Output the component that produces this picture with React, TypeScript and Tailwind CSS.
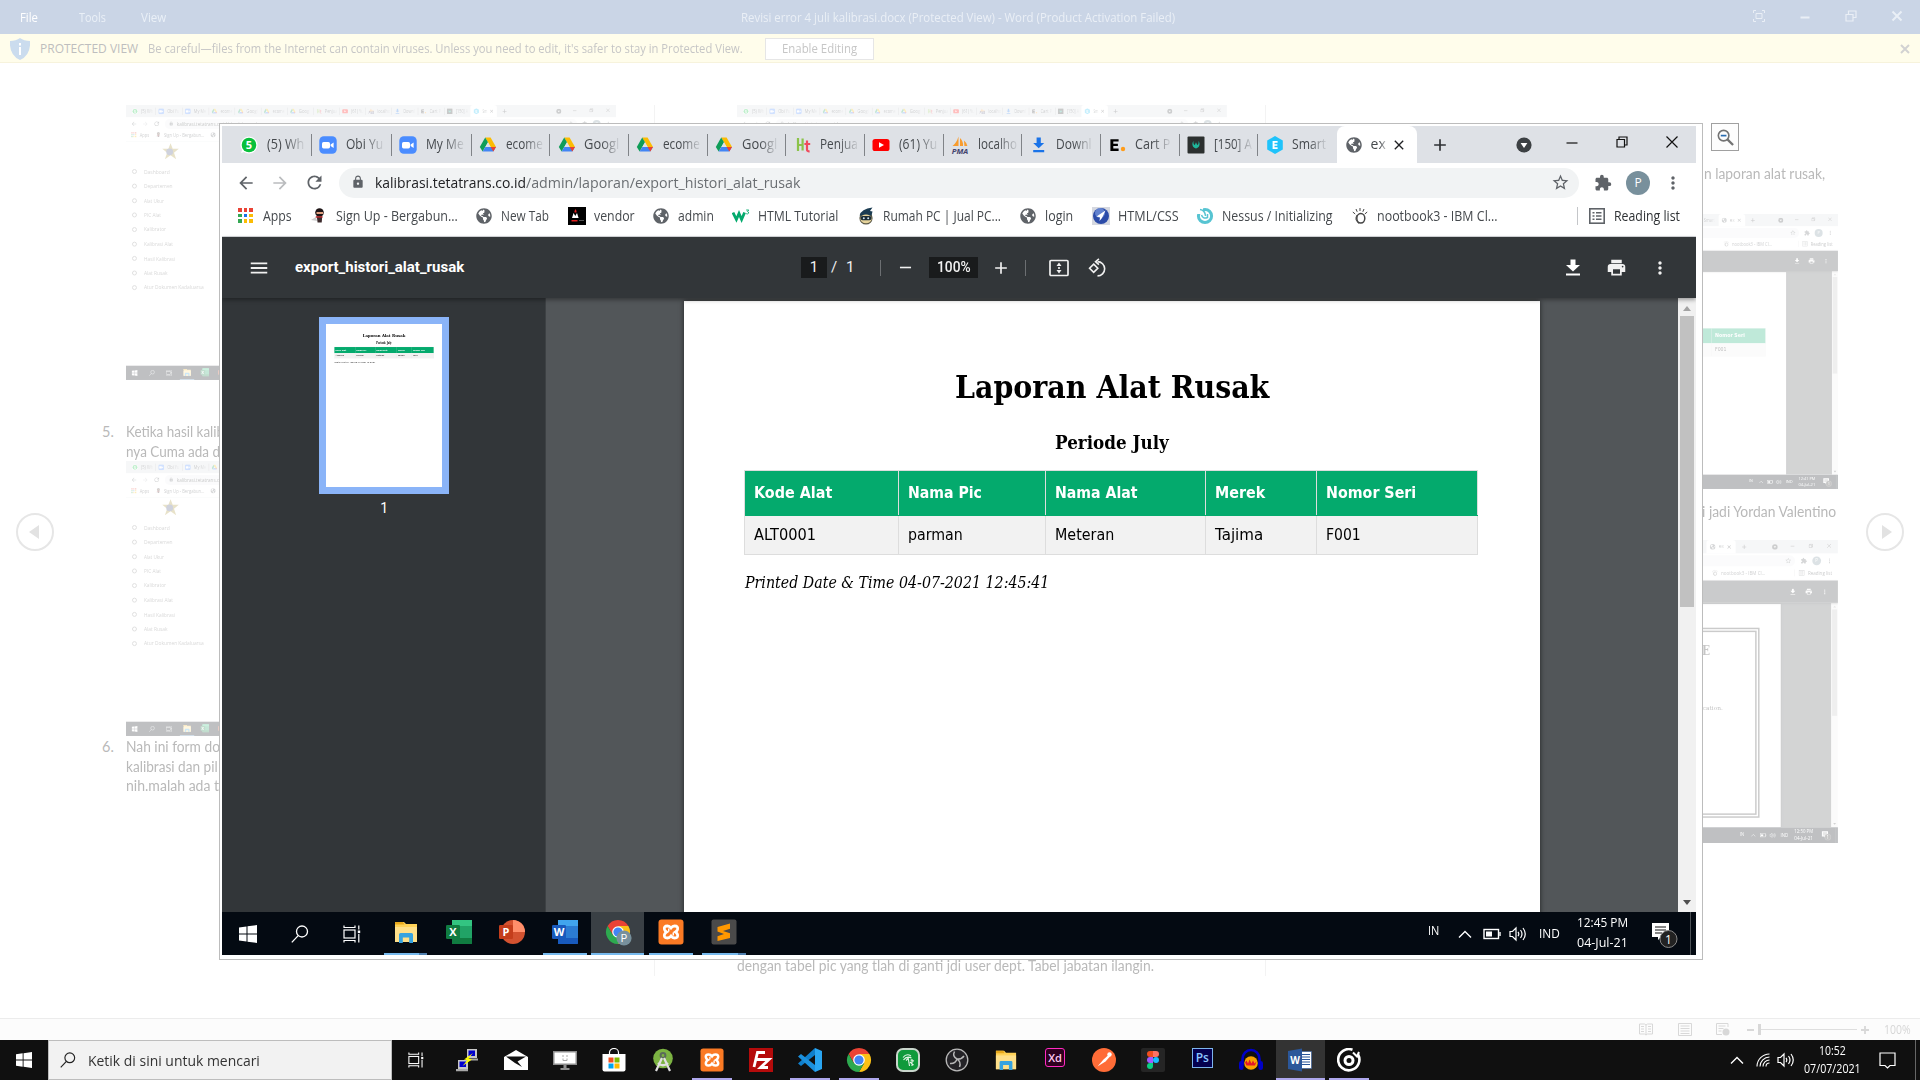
import React, { useLayoutEffect, useRef, useState } from "react";
import {
  MdArrowBack,
  MdArrowForward,
  MdRefresh,
  MdLock,
  MdStarBorder,
  MdExtension,
  MdMoreVert,
  MdMenu,
  MdPrint,
  MdClose,
  MdAdd,
  MdRemove,
} from "react-icons/md";
import { FaGlobeAmericas } from "react-icons/fa";

/* Which part of a browser window can be seen; labels outside it are left blank. */
type View = "full" | "top" | "left" | "right";

/* Text set to an exact width by horizontal scaling. */
function Fit({ w, className = "", show = true, children }: { w: number; className?: string; show?: boolean; children: React.ReactNode }) {
  const ref = useRef<HTMLSpanElement>(null);
  const [sx, setSx] = useState(1);
  useLayoutEffect(() => {
    if (ref.current && ref.current.offsetWidth) setSx(w / ref.current.offsetWidth);
  }, [w]);
  return (
    <span className={"block shrink-0 text-left " + className} style={{ width: w }}>
      <span ref={ref} className="inline-block origin-left whitespace-nowrap" style={{ transform: `scaleX(${sx})` }}>
        {show ? children : "\u00a0"}
      </span>
    </span>
  );
}

/* ---------- small icons ---------- */
const Globe = () => <FaGlobeAmericas className="size-4 text-[#5f6368]" />;

const Drive = () => (
  <svg viewBox="0 0 18 18" className="size-[18px]">
    <path d="M6.2 1.5h5.4l5.4 9.4h-5.4z" fill="#fbbc04" />
    <path d="M6.2 1.5l2.8 4.8-5.4 9.3L.8 10.9z" fill="#0f9d58" />
    <path d="M6.4 10.9H17l-2.7 4.7H3.6z" fill="#4285f4" />
    <path d="M11.6 10.9H17l-2.7 4.7z" fill="#ea4335" />
    <path d="M9 6.3l2.7 4.6H6.4z" fill="#dee1e6" />
  </svg>
);
const Zoom = () => (
  <svg viewBox="0 0 18 18" className="size-[18px]">
    <rect x=".3" y=".3" width="17.4" height="17.4" rx="4.5" fill="#4a8cff" />
    <rect x="3" y="6" width="8" height="6.4" rx="1.6" fill="#fff" />
    <path d="M11.6 8.4l3-2v5.6l-3-2z" fill="#fff" />
  </svg>
);
const WhatsApp = () => (
  <svg viewBox="0 0 18 18" className="size-[18px]">
    <circle cx="9" cy="9" r="8.6" fill="#fff" />
    <path d="M1 17l1.5-4 3 2.6z" fill="#fff" />
    <circle cx="9" cy="9" r="7.3" fill="#09c03b" />
    <text x="9" y="13" textAnchor="middle" fontSize="11" fontWeight="700" fill="#fff" fontFamily="Open Sans, sans-serif">5</text>
  </svg>
);
const Ht = () => (
  <svg viewBox="0 0 18 18" className="size-[18px]" fill="none">
    <path d="M4 2v13M8.600 2.500v12M4 9h5" stroke="#8bc34a" strokeWidth="2.200" />
    <path d="M13 4.500v9q0 2 2.600 1.800M10.400 8h5.800" stroke="#ef4a5c" strokeWidth="2.200" />
  </svg>
);
const YouTube = () => (
  <svg viewBox="0 0 18 18" className="size-[18px]">
    <rect x=".5" y="3" width="17" height="12" rx="2.6" fill="#f00" />
    <path d="M7 6.2l5 2.8-5 2.8z" fill="#fff" />
  </svg>
);
const Pma = () => (
  <svg viewBox="0 0 18 18" className="size-[18px]">
    <path d="M7.500.500v9.500H1.500q4-3 6-9.500zM9 2q3.500 3.500 3 8H9zM13 4.500q3 2.500 3.400 5.500h-3z" fill="#f89c2e" />
    <text x="9" y="17.500" textAnchor="middle" fontSize="7.800" fontWeight="700" fontStyle="italic" fill="#44446e" fontFamily="Open Sans, sans-serif">PMA</text>
  </svg>
);
const Down = () => (
  <svg viewBox="0 0 18 18" className="size-[18px]" fill="#1a73e8">
    <path d="M6.6 1.5h4.2V7h3.4L8.7 12.3 3.2 7h3.4zM3.2 14h11v2.2h-11z" />
  </svg>
);
const ETicket = () => (
  <svg viewBox="0 0 18 18" className="size-[18px]">
    <path d="M1.4 3.2h8.2v2.4H4.3v2.2h4.6v2.3H4.3v2.4h5.3V15H1.4z" fill="#000" />
    <circle cx="14" cy="13" r="2.2" fill="#ff9c1a" />
  </svg>
);
const Rebel = () => (
  <svg viewBox="0 0 18 18" className="size-[18px]">
    <rect x=".5" y=".5" width="17" height="17" rx="1" fill="#2c302f" />
    <path d="M6.600 5C4.400 7.400 5.200 11.800 9 12.400c3.800-.6 4.600-5 2.400-7.400.5 2.200 0 3.500-1.200 3.900L9 6.200 7.800 8.900C6.600 8.500 6.100 7.200 6.600 5z" fill="#1fb59a" />
  </svg>
);
const Hex = () => (
  <svg viewBox="0 0 18 18" className="size-[18px]">
    <path d="M9 0l7.800 4.500v9L9 18l-7.800-4.500v-9z" fill="#1fc3fb" />
    <path d="M6.600 5h5v1.700H8.500v1.500h2.800v1.600H8.500v1.500h3.100V13h-5z" fill="#fff" />
  </svg>
);

const Apps = () => (
  <span className="grid grid-cols-3 gap-[2px]">
    {["bg-[#ea4335]", "bg-[#ea4335]", "bg-[#ea4335]", "bg-[#34a853]", "bg-[#1a73e8]", "bg-[#fbbc04]", "bg-[#34a853]", "bg-[#fbbc04]", "bg-[#fbbc04]"].map((c, i) => (
      <i key={i} className={"size-[3.6px] " + c} />
    ))}
  </span>
);
const Ninja = () => (
  <svg viewBox="0 0 18 18" className="size-[18px]">
    <path d="M1 13l5-3 1 4z" fill="#ccc" />
    <circle cx="9.500" cy="5.500" r="4.300" fill="#1d1416" />
    <path d="M6.500 5h6.600v2H6.500z" fill="#e0a080" />
    <path d="M6.800 9.500h5.400l-.5 6H7.600z" fill="#3b2a2c" />
    <path d="M5.800 9.200h6.700v1.500H5.800z" fill="#b6262a" />
  </svg>
);
const Vendor = () => (
  <svg viewBox="0 0 18 18" className="size-[18px]">
    <path d="M0 0h18v18H0z" fill="#000" />
    <path d="M4 11l1.600-5L7.300 9 9 6l1.600 5z" fill="#fff" />
    <path d="M6.500 4l1-2 1 2v1.500h-2zM3.500 13h6v1.500h-6z" fill="#e02020" />
    <path d="M11 13.500h5" stroke="#666" strokeWidth=".8" />
  </svg>
);
const W3 = () => (
  <svg viewBox="0 0 18 18" className="size-[18px]">
    <path d="M1 5.500l3.400 7 2.600-6 2.600 6 3-7" fill="none" stroke="#04aa6d" strokeWidth="2.800" />
    <path d="M14.200 3h2.600l-1.400 1.500q1.600.2 1.200 1.700-.8 1.100-2.400.5" fill="none" stroke="#04aa6d" strokeWidth=".9" />
  </svg>
);
const Penguin = () => (
  <svg viewBox="0 0 18 18" className="size-[18px]">
    <circle cx="9" cy="11" r="6.600" fill="#5c5a48" />
    <path d="M2.600 8.500Q4 2 15.500.500L13 4l2.500.500-1 4z" fill="#1b3c52" />
    <ellipse cx="9" cy="11.800" rx="5.600" ry="4.400" fill="#e6d39b" />
    <rect x="3.600" y="9" width="10.800" height="4.200" rx="2" fill="#1b2c36" />
    <circle cx="6.800" cy="11.200" r="1" fill="#cfe4ee" />
    <circle cx="11.200" cy="11.200" r="1" fill="#cfe4ee" />
  </svg>
);
const HtmlCss = () => (
  <svg viewBox="0 0 18 18" className="size-[18px]">
    <path d="M0 0h18v18H0z" fill="#d5d8e0" />
    <circle cx="9" cy="9" r="8" fill="#2b4ba8" />
    <circle cx="8" cy="6" r="5" fill="#7a9ae0" opacity=".7" />
    <path d="M13.500 3.500L4.500 9.500l3.500.8L7.500 14l2.500-3z" fill="#fff" />
  </svg>
);
const Nessus = () => (
  <svg viewBox="0 0 18 18" className="size-[18px]" fill="none">
    <circle cx="9" cy="9" r="6.600" stroke="#57c4d2" strokeWidth="3" />
    <path d="M1 1h6v6H1z" fill="#fff" />
    <path d="M4 2.500Q9 3 9.500 9M5.500 8q1.500 4.500 6 2.500V7" stroke="#57c4d2" strokeWidth="1.500" />
  </svg>
);
const Ibm = () => (
  <svg viewBox="0 0 18 18" className="size-[18px]" fill="none" stroke="#444">
    <ellipse cx="9.800" cy="11.300" rx="4" ry="4.800" strokeWidth="1.500" />
    <path d="M6 8q-3 5 2 8.500" strokeWidth=".9" />
    <path d="M9 1v3M5 2l1.200 2.800M13 2l-1.200 2.800M1.800 5l2.400 2M16.200 5l-2.400 2" strokeWidth="1" />
  </svg>
);
const ReadingList = () => (
  <svg viewBox="0 0 16 16" className="size-4" fill="none" stroke="#5f6368">
    <rect x=".8" y=".8" width="14.400" height="14.400" strokeWidth="1.600" />
    <path d="M3.500 4.700h2M7 4.700h5.500M3.500 8h2M7 8h5.500M3.500 11.300h2M7 11.300h5.500" strokeWidth="1.500" />
  </svg>
);

/* ---------- application icons ---------- */
const WinLogo = ({ c = "size-[18px]" }) => (
  <svg viewBox="0 0 18 18" className={c} fill="#fff">
    <path d="M0 2.500L7.500 1.500v7H0zM8.500 1.300L18 0v8.500H8.500zM0 9.500h7.500v7L0 15.500zM8.500 9.500H18V18l-9.500-1.300z" />
  </svg>
);
const Search = ({ c = "size-[18px]", s = "#fff" }) => (
  <svg viewBox="0 0 18 18" className={c} fill="none" stroke={s} strokeWidth="1.300">
    <circle cx="11" cy="6.500" r="5.500" />
    <path d="M7.200 10.600L.8 17.400" />
  </svg>
);
const TaskView = ({ c = "size-[18px]" }) => (
  <svg viewBox="0 0 18 18" className={c} fill="none" stroke="#fff" strokeWidth="1.200">
    <rect x="1" y="5" width="11" height="8" />
    <path d="M1 .5v2h11v-2M1 17.500v-2h11v2M15.800.5v4M15.800 9v8.500" />
    <rect x="14.800" y="5.500" width="2.400" height="2.600" fill="#fff" stroke="none" />
  </svg>
);
const Explorer = ({ c = "size-6" }) => (
  <svg viewBox="0 0 24 24" className={c}>
    <path d="M1 2h9l2 2h11v18H1z" fill="#ffd257" />
    <path d="M1 2h8l1.500 2.600H1z" fill="#e8a91c" />
    <path d="M1 7h22v15H1z" fill="#ffe08a" />
    <path d="M5 23v-8.500q0-1.500 1.500-1.500h11q1.500 0 1.500 1.500V23h-3.800v-5.500H8.800V23z" fill="#37a3e0" />
  </svg>
);
function Office({ letter, tint, dark, light, round = false }: { letter: string; tint: string; dark: string; light: string; round?: boolean }) {
  return (
    <svg viewBox="0 0 26 26" className="size-[26px]">
      {round ? (
        <>
          <circle cx="14" cy="13" r="12" fill={tint} />
          <path d="M14 1a12 12 0 0 1 12 12H14z" fill={light} />
        </>
      ) : (
        <>
          <rect x="6" y="1" width="20" height="24" rx="1.500" fill={tint} />
          <path d="M6 1h20v6H6z" fill={light} />
          <path d="M6 19h20v5q0 1-1 1H6z" fill={dark} />
        </>
      )}
      <rect x="0" y="6" width="14" height="14" rx="1.200" fill={dark} />
      <text x="7" y="17" textAnchor="middle" fontSize="11" fontWeight="700" fill="#fff" fontFamily="Open Sans, sans-serif">{letter}</text>
    </svg>
  );
}
const Chrome = ({ badge = false }) => (
  <svg viewBox="0 0 28 28" className="size-[28px]">
    <path d="M14 8h10.400a12 12 0 0 0-20.800 0L8.800 17z" fill="#ea4335" />
    <path d="M19.200 17L14 26a12 12 0 0 0 10.400-18H14z" fill="#fbc116" />
    <path d="M8.800 17L3.600 8A12 12 0 0 0 14 26l5.200-9z" fill="#2da94f" />
    <circle cx="14" cy="14" r="5.800" fill="#fff" />
    <circle cx="14" cy="14" r="4.600" fill="#4285f4" />
    {badge && (
      <>
        <circle cx="20" cy="20" r="7.600" fill="#78909c" />
        <text x="20" y="23.500" textAnchor="middle" fontSize="10" fill="#fff" fontFamily="Roboto, sans-serif">P</text>
      </>
    )}
  </svg>
);
const Xampp = ({ c = "size-[26px]" }) => (
  <svg viewBox="0 0 26 26" className={c}>
    <rect x=".5" y=".5" width="25" height="25" rx="3" fill="#fb7a24" />
    <path d="M9.500 7q-4 0-3 3.500 .5 1.500 2 2.500-1.500 1-2 2.500-1 3.500 3 3.500 2 0 3.500-2 1.500 2 3.500 2 4 0 3-3.500-.5-1.500-2-2.500 1.500-1 2-2.500 1-3.500-3-3.500-2 0-3.500 2-1.500-2-3.500-2zM10 11l1.500 0M14.500 15h1.500" fill="none" stroke="#fff" strokeWidth="2.800" />
  </svg>
);
const Sublime = () => (
  <svg viewBox="0 0 26 26" className="size-[26px]">
    <rect x=".5" y=".5" width="25" height="25" rx="2" fill="#4a4a4a" />
    <path d="M19 4.500v5.200l-7 2.200 7 2.300v4.800L6.500 22v-4.800l6.500-2.200-6.500-2.400V8z" fill="#ff9800" />
  </svg>
);
const Battery = () => (
  <svg viewBox="0 0 18 12" className="h-3 w-[18px]" fill="none" stroke="#fff" strokeWidth="1.400">
    <rect x="1" y="1.500" width="14.500" height="9" />
    <path d="M17 4v4" />
    <rect x="3" y="3.500" width="6" height="5" fill="#fff" stroke="none" />
  </svg>
);
const Speaker = () => (
  <svg viewBox="0 0 18 16" className="h-4 w-[18px]" fill="none" stroke="#fff" strokeWidth="1.200">
    <path d="M1 5.500h2.500L7 2v12L3.500 10.500H1z" />
    <path d="M9 5.800q1.600 2.200 0 4.400M11.500 4q3 4 0 8M14 2q4.500 6 0 12" />
  </svg>
);
const Chevron = () => (
  <svg viewBox="0 0 14 8" className="h-2 w-[14px]" fill="none" stroke="#fff" strokeWidth="1.400">
    <path d="M1 7.500l6-6 6 6" />
  </svg>
);
const Download = () => (
  <svg viewBox="0 0 14 17" className="h-[17px] w-[14px]" fill="#fff">
    <path d="M4.500.5h5v5.500H14l-7 6.500L0 6h4.500zM0 14.500h14v2H0z" />
  </svg>
);

/* ---------- browser window ---------- */
type TabInfo = { icon: React.ReactNode; text: string; tw: number; w: string };
const TABS: TabInfo[] = [
  { icon: <WhatsApp />, text: "(5) Wh", tw: 37, w: "w-[79px]" },
  { icon: <Zoom />, text: "Obi Yu", tw: 37, w: "w-[80px]" },
  { icon: <Zoom />, text: "My Me", tw: 38, w: "w-[80px]" },
  { icon: <Drive />, text: "ecome", tw: 37, w: "w-[78.700px]" },
  { icon: <Drive />, text: "Googl", tw: 35, w: "w-[78.700px]" },
  { icon: <Drive />, text: "ecome", tw: 37, w: "w-[78.700px]" },
  { icon: <Drive />, text: "Googl", tw: 35, w: "w-[78.700px]" },
  { icon: <Ht />, text: "Penjua", tw: 38, w: "w-[78.700px]" },
  { icon: <YouTube />, text: "(61) Yu", tw: 38, w: "w-[78.700px]" },
  { icon: <Pma />, text: "localho", tw: 39, w: "w-[78.700px]" },
  { icon: <Down />, text: "Downl", tw: 36, w: "w-[78.700px]" },
  { icon: <ETicket />, text: "Cart P", tw: 35, w: "w-[78.700px]" },
  { icon: <Rebel />, text: "[150] A", tw: 38, w: "w-[78.700px]" },
  { icon: <Hex />, text: "Smart", tw: 34, w: "w-[78.200px]" },
];

function TabStrip({ app, view }: { app: boolean; view: View }) {
  const tabs = app ? TABS.slice(0, 13) : TABS;
  const shown = (i: number) => (view === "left" ? i < 3 : view === "right" ? i === 13 : true);
  return (
    <div className="flex h-[37px] shrink-0 items-center bg-[#dee1e6] pl-[10.500px]">
      {tabs.map((t, i) => (
        <div key={i} className={"flex h-[22px] shrink-0 items-center overflow-hidden pl-[7.500px] " + t.w + (i < tabs.length - 1 ? " border-r border-[#808388]" : "")}>
          <span className="mr-[8.500px] flex size-[18px] shrink-0 items-center justify-center">{t.icon}</span>
          <Fit w={t.tw} show={shown(i)} className="mb-[2px] text-[14px] leading-[20px] text-[#45494d] [mask-image:linear-gradient(to_right,#000_50%,rgba(0,0,0,0.1))]">{t.text}</Fit>
        </div>
      ))}
      <div className="flex h-full w-[80px] shrink-0 items-center rounded-t-lg bg-white pl-[9px]">
        {app ? <Hex /> : <Globe />}
        <Fit w={15} show={view !== "left"} className="mb-[2px] ml-[9px] text-[14px] leading-[20px] text-[#45494d] [mask-image:linear-gradient(to_right,#000_55%,rgba(0,0,0,0.3))]">{app ? "Sm" : "ex"}</Fit>
        <MdClose className="ml-[5px] size-4 text-[#202124]" />
      </div>
      <MdAdd className="ml-[13px] size-[20px] text-[#2e3134]" />
      <div className="ml-auto flex items-center pr-[18px]">
        <svg viewBox="0 0 16 16" className="size-4">
          <circle cx="8" cy="8" r="7.600" fill="#3c4043" />
          <path d="M4.600 6h6.800L8 11z" fill="#fff" />
        </svg>
        <svg viewBox="0 0 12 12" className="mb-[6px] ml-[34px] size-3" stroke="#111" strokeWidth="1.200">
          <path d="M.5 7h11" />
        </svg>
        <svg viewBox="0 0 12 12" className="mb-[6px] ml-[38px] size-3" fill="none" stroke="#111" strokeWidth="1.200">
          <path d="M1 3.500h7.500V11H1zM3 3V1h8v8H9" />
        </svg>
        <svg viewBox="0 0 12 12" className="mb-[6px] ml-[38px] size-3" stroke="#111" strokeWidth="1.200">
          <path d="M.5.5l11 11M11.500.5l-11 11" />
        </svg>
      </div>
    </div>
  );
}

function AddressBar({ app, view }: { app: boolean; view: View }) {
  return (
    <div className="flex h-[39px] shrink-0 items-center bg-white pl-[14px] text-[#5f6368]">
      <MdArrowBack className="size-[20px]" />
      <MdArrowForward className="ml-[14px] size-[20px] text-[#babcbe]" />
      <MdRefresh className="ml-[14px] size-[21px]" />
      <div className="ml-[14px] flex h-[30px] w-[1240px] items-center rounded-full bg-[#f1f3f4] pb-px pl-[12px]">
        <MdLock className="size-[14px]" />
        <Fit w={151} show={view !== "right"} className="ml-[10px] text-[15px] text-[#202124]">kalibrasi.tetatrans.co.id</Fit>
        <Fit w={app ? 90 : 274} show={view === "full" || view === "top"} className="text-[15px] text-[#6a6e72]">{app ? "/dashboard" : "/admin/laporan/export_histori_alat_rusak"}</Fit>
        <MdStarBorder className="mr-[9px] ml-auto size-[19px]" />
      </div>
      <MdExtension className="ml-[15px] size-[18px]" />
      <span className="ml-[14px] flex size-6 items-center justify-center rounded-full bg-[#78909c] text-[12px] text-white">P</span>
      <MdMoreVert className="ml-[13px] size-[20px]" />
    </div>
  );
}

const BOOKMARKS: [React.ReactNode, string, number][] = [
  [<Apps />, "Apps", 29],
  [<Ninja />, "Sign Up - Bergabun...", 121.5],
  [<Globe />, "New Tab", 48],
  [<Vendor />, "vendor", 40.5],
  [<Globe />, "admin", 35.5],
  [<W3 />, "HTML Tutorial", 80.5],
  [<Penguin />, "Rumah PC | Jual PC...", 118],
  [<Globe />, "login", 28.5],
  [<HtmlCss />, "HTML/CSS", 60.5],
  [<Nessus />, "Nessus / Initializing", 110.5],
  [<Ibm />, "nootbook3 - IBM Cl...", 121],
];

function Bookmarks({ view }: { view: View }) {
  const shown = (i: number) => view === "full" || (view === "right" ? i === 10 : i < 2);
  return (
    <div className="flex h-[35px] shrink-0 items-center gap-[18.200px] border-b border-[#d5d7da] bg-white pb-[7px] pl-[14.500px] text-[14px] text-[#45494d]">
      {BOOKMARKS.map(([icon, text, w], i) => (
        <div key={i} className="flex shrink-0 items-center gap-2">
          <span className="flex size-[18px] items-center justify-center">{icon}</span>
          <Fit w={w} show={shown(i)}>{text}</Fit>
        </div>
      ))}
      <div className="mr-4 ml-auto flex items-center">
        <i className="mr-[11px] h-[18px] w-px bg-[#c4c6c9]" />
        <ReadingList />
        <Fit w={66} show={view === "full" || view === "right"} className="ml-[9px] text-[#2e3134]">Reading list</Fit>
      </div>
    </div>
  );
}

function PdfToolbar({ full }: { full: boolean }) {
  return (
    <div className="z-10 flex h-[61px] shrink-0 items-center bg-[#323639] pl-[26px] font-['Roboto',sans-serif] text-[15px] text-[#f1f1f1] shadow-[0_2px_4px_rgba(0,0,0,0.35)]">
      <MdMenu className="size-[22px]" />
      <Fit w={169} show={full} className="ml-[25px] font-bold text-white">export_histori_alat_rusak</Fit>
      <span className="ml-[337px] flex h-[21px] w-[26px] items-center justify-center bg-[#191b1c]">{full && "1"}</span>
      <span className="ml-[4px] w-[9px]">{full && "/"}</span>
      <span className="ml-[6px] w-[9px]">{full && "1"}</span>
      <i className="ml-[25px] h-4 w-px bg-[#6c6f72]" />
      <MdRemove className="ml-[15px] size-[19px]" />
      <span className="ml-[14px] flex h-[21px] w-[49px] items-center justify-center bg-[#191b1c]"><Fit w={34} show={full} className="font-medium">100%</Fit></span>
      <MdAdd className="ml-[13px] size-[20px]" />
      <i className="ml-[14px] h-4 w-px bg-[#6c6f72]" />
      <svg viewBox="0 0 20 18" className="ml-[23px] h-[18px] w-[20px]" fill="none" stroke="#f1f1f1" strokeWidth="1.700">
        <rect x="1" y="1.500" width="18" height="15" rx="1" />
        <path d="M10 3.500L12.500 7h-5zM10 14.500l2.500-3.500h-5z" fill="#f1f1f1" stroke="none" />
        <path d="M10 8v2" />
      </svg>
      <svg viewBox="0 0 22 20" className="ml-[18px] h-[20px] w-[21px]" fill="none" stroke="#f1f1f1" strokeWidth="1.700">
        <path d="M7 6l4.300 4.300L7 14.600l-4.300-4.300z" />
        <path d="M11 3.300a7.500 7.500 0 1 1 0 15" />
        <path d="M12.500.5L9 3.400l3.500 3" />
      </svg>
      <div className="ml-auto flex items-center pr-[26px]">
        <Download />
        <MdPrint className="ml-[26px] size-[21px]" />
        <MdMoreVert className="ml-[23px] size-[20px]" />
      </div>
    </div>
  );
}

const COLUMNS: { head: string; hw: number; cell: string; cw: number; w: string }[] = [
  { head: "Kode Alat", hw: 78, cell: "ALT0001", cw: 62, w: "w-[154px]" },
  { head: "Nama Pic", hw: 74, cell: "parman", cw: 55, w: "w-[147px]" },
  { head: "Nama Alat", hw: 83, cell: "Meteran", cw: 59, w: "w-[160px]" },
  { head: "Merek", hw: 50, cell: "Tajima", cw: 48, w: "w-[111px]" },
  { head: "Nomor Seri", hw: 90, cell: "F001", cw: 35, w: "w-[161px]" },
];

function ReportPage({ full }: { full: boolean }) {
  return (
    <div className="flex flex-col items-center text-black">
      <Fit w={314} show={full} className="mt-[64px] font-['DejaVu_Serif',serif] text-[32px] leading-[44px] font-bold">Laporan Alat Rusak</Fit>
      <Fit w={114} show={full} className="mt-[19px] font-['DejaVu_Serif',serif] text-[19px] leading-[28px] font-bold">Periode July</Fit>
      <div className="mt-[14px] mr-px border border-r-0 border-[#ddd] font-['DejaVu_Sans',sans-serif] text-[16px]">
        <div className="flex h-[45px] bg-[#04aa6d] pb-px font-bold text-white">
          {COLUMNS.map((c, i) => (
            <div key={c.head} className={"flex items-center border-r border-[#ddd] pl-[8.500px] " + c.w}><Fit w={c.hw} show={full || i === 4}>{c.head}</Fit></div>
          ))}
        </div>
        <div className="flex h-[38px] bg-[#f2f2f2]">
          {COLUMNS.map((c, i) => (
            <div key={c.cell} className={"flex items-center border-r border-[#ddd] pl-[8.500px] " + c.w}><Fit w={c.cw} show={full || i === 4}>{c.cell}</Fit></div>
          ))}
        </div>
      </div>
      <Fit w={304} show={full} className="mt-[17px] mr-[430px] font-['DejaVu_Serif',serif] text-[16px] leading-[22px] italic">Printed Date &amp; Time 04-07-2021 12:45:41</Fit>
    </div>
  );
}

function CertificatePage() {
  return (
    <div className="mx-[58px] mt-[65px] flex h-[520px] flex-col items-end border-[12px] border-double border-[#333] font-['DejaVu_Serif',serif]">
      <Fit w={22} className="mt-[26px] mr-[123px] text-[34px] font-bold text-[#222]">E</Fit>
      <Fit w={60} className="mt-[118px] mr-[88px] text-[16px]">ication.</Fit>
    </div>
  );
}

function Thumbnail({ full }: { full: boolean }) {
  return (
    <div className="flex w-[323.500px] shrink-0 flex-col items-center border-r border-[#3d4144] bg-[#323639]">
      <div className="mt-[19px] mr-[-1px] h-[177px] w-[130px] shrink-0 border-[7px] border-[#8ab4f8] bg-white">
        <div className="h-0 w-0 origin-top-left [transform:scale(0.1355)]">
          <div className="w-[856px]"><ReportPage full={full} /></div>
        </div>
      </div>
      <span className="mt-[4px] ml-[2px] font-['Roboto',sans-serif] text-[14px] text-white">{full && "1"}</span>
    </div>
  );
}

function PdfViewer({ certificate, full }: { certificate: boolean; full: boolean }) {
  return (
    <>
      <PdfToolbar full={full} />
      <div className="flex min-h-0 flex-1 overflow-hidden">
        <Thumbnail full={full} />
        <div className="flex-1 bg-[#525659] pt-[3px] pl-[138px]">
          <div className="h-[1200px] w-[856px] overflow-hidden bg-white shadow-[0_0_5px_rgba(0,0,0,0.6)]">
            {certificate ? <CertificatePage /> : <ReportPage full={full} />}
          </div>
        </div>
        <div className="flex w-[18px] flex-col items-center bg-[#f1f1f1]">
          <i className="mt-[8px] size-0 border-x-4 border-b-[5px] border-x-transparent border-b-[#a3a3a3]" />
          <i className="mt-[5px] h-[291px] w-[14px] bg-[#c1c1c1]" />
          <i className="mt-auto mb-[7px] size-0 border-x-4 border-t-[5px] border-x-transparent border-t-[#505050]" />
        </div>
      </div>
    </>
  );
}

const MENU: [string, number][] = [
  ["Dashboard", 77],
  ["Departemen", 86],
  ["Alat Ukur", 60],
  ["PIC Alat", 52],
  ["Kalibrator", 66],
  ["Kalibrasi Alat", 88],
  ["Hasil Kalibrasi", 94],
  ["Alat Rusak", 71],
  ["Atur Dokumen Kadaluarsa", 179],
];

function AppBody() {
  return (
    <div className="flex min-h-0 flex-1 flex-col bg-white">
      <svg viewBox="0 0 40 40" className="mt-[3px] ml-[108px] size-[52px]">
        <path d="M20 1l5 13h14L28 23l5 15-13-9-13 9 5-15L1 14h14z" fill="#a8902c" />
        <circle cx="18" cy="21" r="8" fill="#2a3f8f" opacity=".8" />
      </svg>
      <div className="mt-[13px] flex flex-col">
        {MENU.map(([m, w]) => (
          <div key={m} className="flex h-[43.700px] items-center text-[15px] text-[#666]">
            <i className="mr-[21px] ml-[18px] size-[15px] rounded-full border-3 border-[#888]" />
            <Fit w={w}>{m}</Fit>
          </div>
        ))}
      </div>
    </div>
  );
}

function Slot({ children, bar = "", active = false, extra = false }: { children: React.ReactNode; bar?: string; active?: boolean; extra?: boolean }) {
  return (
    <div className={"flex h-full w-[53px] shrink-0 flex-col items-center " + (active ? "bg-[#3a4045]" : "")}>
      <div className="flex flex-1 items-center justify-center">{children}</div>
      <div className={"flex h-[2.500px] justify-end bg-[#76b9ed] " + (bar || "invisible w-0")}>
        {extra && <i className="w-2 bg-[#4f7fae]" />}
      </div>
    </div>
  );
}

function InnerTaskbar({ time, view }: { time: string; view: View }) {
  const tray = view === "full" || view === "right";
  return (
    <div className="flex h-[43px] shrink-0 items-center bg-[#040a12] text-white">
      <div className="flex w-[52px] justify-center"><WinLogo /></div>
      <div className="flex w-[52px] justify-center"><Search /></div>
      <div className="mr-[2px] flex w-[51px] justify-center"><TaskView /></div>
      <Slot bar="w-[43px]" extra><Explorer /></Slot>
      <Slot><Office letter="X" tint="#21a366" light="#33c481" dark="#107c41" /></Slot>
      <Slot><Office letter="P" tint="#d35230" light="#ff8f6b" dark="#c43e1c" round /></Slot>
      <Slot bar="w-[44px]"><Office letter="W" tint="#2b7cd3" light="#41a5ee" dark="#185abd" /></Slot>
      <Slot bar="w-full" active><Chrome badge /></Slot>
      <Slot bar="w-[44px]"><Xampp /></Slot>
      <Slot bar="w-[44px]" extra><Sublime /></Slot>
      <div className="ml-auto flex h-full items-center text-[13px]">
        <Fit w={11} show={tray} className="mr-[19px] mb-[5px] text-[12px]">IN</Fit>
        <Chevron />
        <span className="ml-[11px]"><Battery /></span>
        <span className="ml-[8px]"><Speaker /></span>
        <Fit w={21} show={tray} className="ml-[12px]">IND</Fit>
        <div className="mb-[2px] ml-[17px] flex flex-col leading-[19.500px]">
          <Fit w={51} show={tray}>{time}</Fit>
          <Fit w={51} show={tray}>04-Jul-21</Fit>
        </div>
        <svg viewBox="0 0 27 27" className="mt-1 ml-[23px] h-[27px] w-[27px]">
          <path d="M1 1h17v14h-8l-3 3v-3H1z" fill="#fff" />
          <path d="M4 5h11M4 8h11M4 11h7" stroke="#111" strokeWidth="1.200" />
          <circle cx="17.500" cy="17" r="8.500" fill="#222" stroke="#888" />
          <text x="17.500" y="21.500" textAnchor="middle" fontSize="12" fill="#fff" fontFamily="Open Sans, sans-serif">1</text>
        </svg>
        <i className="mr-[5px] ml-[12px] h-full w-px bg-[#4d5257]" />
      </div>
    </div>
  );
}

function BrowserWindow({ kind, time = "12:45 PM", view = "full" }: { kind: "report" | "certificate" | "app"; time?: string; view?: View }) {
  return (
    <div className="flex h-[829px] w-[1474px] flex-col overflow-hidden bg-white">
      <TabStrip app={kind === "app"} view={view} />
      <AddressBar app={kind === "app"} view={view} />
      <Bookmarks view={view} />
      {kind === "app" ? <AppBody /> : <PdfViewer certificate={kind === "certificate"} full={view === "full"} />}
      <InnerTaskbar time={time} view={view} />
    </div>
  );
}

/* ---------- word processor behind the dialog ---------- */
function SmallShot({ kind, time, view }: { kind: "report" | "app"; time: string; view: View }) {
  return (
    <div className="h-[275px] w-[490px] shrink-0 overflow-hidden opacity-25">
      <div className="h-0 w-0 origin-top-left [transform:scale(0.3324,0.3317)]"><BrowserWindow kind={kind} time={time} view={view} /></div>
    </div>
  );
}

const DOC = "font-['Lato',sans-serif] text-[14.500px] text-[#b9b9b9]";

function Document() {
  return (
    <div className="flex h-[955px] shrink-0 bg-white">
      <div className="flex w-[655px] shrink-0 flex-col pt-[42px] pb-[42px]">
        <div className="flex flex-1 flex-col border-r border-[#f3f3f3] pl-[102px]">
          <div className="pl-6"><SmallShot kind="app" time="12:40 PM" view="top" /></div>
          <div className={"mt-[42px] flex leading-[19.500px] " + DOC}>
            <span className="w-6 shrink-0">5.</span>
            <div>
              <Fit w={103}>Ketika hasil kalibr</Fit>
              <Fit w={94}>nya Cuma ada d</Fit>
            </div>
          </div>
          <div className="pl-6"><SmallShot kind="app" time="12:42 PM" view="left" /></div>
          <div className={"mt-[1px] flex leading-[19.700px] " + DOC}>
            <span className="w-6 shrink-0">6.</span>
            <div>
              <Fit w={94}>Nah ini form do</Fit>
              <Fit w={92}>kalibrasi dan pil</Fit>
              <Fit w={93}>nih.malah ada t</Fit>
            </div>
          </div>
        </div>
      </div>
      <div className="flex w-[611px] shrink-0 flex-col py-[42px]">
        <div className="flex flex-1 flex-col justify-between border-r border-[#f3f3f3] pl-[82px]">
          <div className="h-[19px] w-[490px] overflow-hidden opacity-25">
            <div className="h-0 w-0 origin-top-left [transform:scale(0.3324,0.3317)]">
              <div className="w-[1474px]">
                <TabStrip app view="top" />
                <AddressBar app view="left" />
              </div>
            </div>
          </div>
          <Fit w={417} className={"leading-[20px] " + DOC}>dengan tabel pic yang tlah di ganti jdi user dept. Tabel jabatan ilangin.</Fit>
        </div>
      </div>
      <div className="flex w-[572px] shrink-0 flex-col items-end pt-[101px]">
        <Fit w={121} className={"mr-[13px] leading-[20px] " + DOC}>n laporan alat rusak,</Fit>
        <div className="mt-[30px]"><SmallShot kind="report" time="12:41 PM" view="right" /></div>
        <Fit w={134} className={"mt-[13px] mr-[2px] leading-[20px] " + DOC}>i jadi Yordan Valentino</Fit>
        <div className="mt-[18px] h-[303px] w-[540px] shrink-0 overflow-hidden opacity-25">
          <div className="h-0 w-0 origin-top-left [transform:scale(0.3663,0.3655)]"><BrowserWindow kind="certificate" time="12:50 PM" view="right" /></div>
        </div>
      </div>
    </div>
  );
}

function TitleBar() {
  return (
    <div className="flex h-[34px] shrink-0 items-center bg-[#cad5e6] pt-[2px] text-[12px] text-[#eaf0f7]">
      <Fit w={18} className="ml-[20px] text-white">File</Fit>
      <Fit w={27} className="ml-[41px]">Tools</Fit>
      <Fit w={25} className="ml-[35px]">View</Fit>
      <Fit w={434} className="ml-[575px] text-[#eaeff6]">Revisi error 4 juli kalibrasi.docx (Protected View) - Word (Product Activation Failed)</Fit>
      <div className="mr-[17px] mb-1 ml-auto flex items-center gap-[34px]">
        <svg viewBox="0 0 12 12" className="size-3" fill="none" stroke="#eaeff6"><path d="M.5 3V.5H3M9 .5h2.500V3M11.500 9v2.500H9M3 11.500H.5V9M3 3.500h6v5H3z" /></svg>
        <svg viewBox="0 0 12 12" className="size-3" stroke="#eaeff6" strokeWidth="2"><path d="M1.500 7.500h9" /></svg>
        <svg viewBox="0 0 12 12" className="size-3" fill="none" stroke="#eaeff6" strokeWidth="1.200"><path d="M1 4.500h7V11H1zM3.500 4V1H11v6.500H8.500" /></svg>
        <svg viewBox="0 0 12 12" className="size-3" stroke="#eaeff6" strokeWidth="2"><path d="M1.500 1.500l9 9M10.500 1.500l-9 9" /></svg>
      </div>
    </div>
  );
}

function ProtectedBar() {
  return (
    <div className="flex h-[29px] shrink-0 items-center border-b border-[#f7f3dc] bg-[#fffdeb] pt-px text-[12px] text-[#c6c6c6]">
      <svg viewBox="0 0 20 22" className="ml-[10px] h-[22px] w-5">
        <path d="M10 0q4 3 10 3 1 14-10 19Q-1 17 0 3q6 0 10-3z" fill="#cbdcee" />
        <path d="M9 5h2v2.400H9zM9 9h2v8H9z" fill="#fff" />
      </svg>
      <Fit w={98} className="ml-[10px] text-[#bebebe]">PROTECTED VIEW</Fit>
      <Fit w={595} className="ml-[10px]">Be careful—files from the Internet can contain viruses. Unless you need to edit, it's safer to stay in Protected View.</Fit>
      <div className="ml-[22px] flex h-[22px] w-[109px] items-center justify-center border border-[#e6e6e6] bg-white"><Fit w={75}>Enable Editing</Fit></div>
      <svg viewBox="0 0 10 10" className="mr-[10px] ml-auto size-[10px]" stroke="#d2d2d2" strokeWidth="2"><path d="M1 1l8 8M9 1L1 9" /></svg>
    </div>
  );
}

function StatusBar() {
  return (
    <div className="flex h-[22px] shrink-0 items-center justify-end border-t border-[#ececec] bg-[#fcfcfc] pr-[9px] text-[12px] text-[#d6d6d6]">
      <svg viewBox="0 0 14 13" className="h-[13px] w-[14px]" fill="none" stroke="#d8d8d8"><path d="M.5 1h5L7 2l1.500-1h5v10h-5L7 12l-1.500-1h-5zM7 2v10M2 3.500h3M2 6h3M2 8.500h3M9 3.500h3M9 6h3M9 8.500h3" /></svg>
      <svg viewBox="0 0 14 13" className="ml-[25px] h-[13px] w-[14px]" fill="none" stroke="#d8d8d8"><path d="M.5.5h13v12H.5zM2.500 3h9M2.500 5.500h9M2.500 8h9M2.500 10.500h9" /></svg>
      <svg viewBox="0 0 14 13" className="ml-[24px] h-[13px] w-[14px]" fill="none" stroke="#d8d8d8"><path d="M12 4V.5H.5v11H6M2.500 3h7M2.500 5.500h5M2.500 8h3" /><circle cx="10" cy="9" r="3.500" fill="#d8d8d8" stroke="none" /></svg>
      <i className="ml-[17px] h-[2px] w-[7px] bg-[#d8d8d8]" />
      <i className="ml-[4px] h-[11px] w-[3px] bg-[#d8d8d8]" />
      <i className="h-px w-[96px] bg-[#dedede]" />
      <svg viewBox="0 0 8 8" className="ml-[4px] size-2" stroke="#d8d8d8" strokeWidth="1.800"><path d="M0 4h8M4 0v8" /></svg>
      <Fit w={27} className="ml-[15px]">100%</Fit>
    </div>
  );
}

/* ---------- desktop taskbar ---------- */
const Putty = () => (
  <svg viewBox="0 0 24 24" className="size-6">
    <path d="M12 1h10v9H12zM3 12h10v9H3z" fill="#c8c8c8" />
    <path d="M13.500 2.500h6.500V8h-6.500zM4.500 13.500H11V19H4.500z" fill="#0000d0" />
    <path d="M11 10.500h12v2H11zM1 21h12v2.200H1z" fill="#a8a8a8" />
    <path d="M18 5l-9 6.500 3.500.5-5 6 9.500-6.500-3.500-1z" fill="#ff0" />
  </svg>
);
const Mail = () => (
  <svg viewBox="0 0 24 20" className="h-5 w-6"><path d="M0 7l12-7 12 7v13H0z" fill="#fff" /><path d="M2 6.500h20L13.500 11.500l4.500 5.500L11 13z" fill="#101010" /></svg>
);
const Monitor = () => (
  <svg viewBox="0 0 24 20" className="h-5 w-6"><path d="M0 1h24v14H0z" fill="#8d8d8d" /><path d="M1.500 2.500h21v11h-21z" fill="#fff" /><path d="M10.500 15h3v3h3v2h-9v-2h3z" fill="#8d8d8d" /><path d="M10 5v2M14 5v2M10 8.500v2h4v-2" stroke="#aaa" fill="none" /></svg>
);
const Store = () => (
  <svg viewBox="0 0 24 24" className="size-6">
    <path d="M7.500 7V4.500a4.500 4 0 0 1 9 0V7" fill="none" stroke="#fff" strokeWidth="1.200" />
    <path d="M.5 6h23v15.500q0 2-2 2h-19q-2 0-2-2z" fill="#fff" />
    <path d="M6.500 9.500h5v5h-5z" fill="#f25022" /><path d="M12.500 9.500h5v5h-5z" fill="#7fba00" /><path d="M6.500 15.500h5v5h-5z" fill="#00a4ef" /><path d="M12.500 15.500h5v5h-5z" fill="#ffb900" />
  </svg>
);
const AndroidStudio = () => (
  <svg viewBox="0 0 24 24" className="size-6"><circle cx="12" cy="10.500" r="9.800" fill="#7cb342" /><circle cx="12" cy="7.500" r="2.400" fill="none" stroke="#5a6a5a" strokeWidth="2" /><path d="M11 10L5 23M13 10l6 13M7 15q5 4.500 10 0" stroke="#e0e0e0" strokeWidth="2.200" fill="none" /></svg>
);
const FileZilla = () => (
  <svg viewBox="0 0 24 24" className="size-6"><rect width="24" height="24" fill="#b50b0b" /><path d="M5 19L8.500 4.500H16M6.500 11.500h6M12 11.500h8l-8.500 8H19" stroke="#fff" strokeWidth="2.800" fill="none" /></svg>
);
const VsCode = () => (
  <svg viewBox="0 0 24 24" className="size-6"><path d="M17 0v7L3 18l-3-2.500z" fill="#0f7fcc" /><path d="M17 24v-7L3 6 0 8.500z" fill="#1b90dd" /><path d="M17 0l7 3v18l-7 3z" fill="#2aa6f2" /></svg>
);
const GreenTree = () => (
  <svg viewBox="0 0 24 24" className="size-6"><rect x="1" y="1" width="22" height="22" rx="6" fill="#109a3c" stroke="#c9d6cc" strokeWidth="2" /><path d="M7 9.500q3.500-4.500 8-1.500M7.500 12q3-4.500 8-2M12 9l1.500 9M10 12.500l2-2M14.500 12l3.500 1M14 14l3.500 3M16 11v7" stroke="#e6f5e9" strokeWidth="1.100" fill="none" /></svg>
);
const Obs = () => (
  <svg viewBox="0 0 24 24" className="size-6"><circle cx="12" cy="12" r="10.800" fill="#242327" stroke="#b8b8b8" strokeWidth="1.300" /><path d="M9.500 3.500q-2.500 5 2.500 7.500 4.500.5 7-3M12 11q-1.500 5-7 4.500M12 11q4.500 3 2.500 8" stroke="#b8b8b8" strokeWidth="1.500" fill="none" /></svg>
);
const Xd = () => (
  <span className="mb-1 flex h-[19px] w-[20px] items-center justify-center rounded-[3px] border-[1.500px] border-[#ff2bc2] bg-[#2e001e] text-[11px] leading-none font-semibold text-[#ffc9f0]">Xd</span>
);
const Ps = () => (
  <span className="mb-1 flex h-[20px] w-[21px] items-center justify-center border-[1.500px] border-[#7db5ee] bg-[#04004f] text-[12px] leading-none font-semibold text-[#8cc7ff]">Ps</span>
);
const Postman = () => (
  <svg viewBox="0 0 24 24" className="size-6"><circle cx="12" cy="12" r="12" fill="#ff6c37" /><path d="M5.500 18.500l6-7 5-4.500 1.500 1.500-4.500 5z" fill="#fff" /><circle cx="17.500" cy="6.500" r="2.200" fill="#fff" /></svg>
);
const Figma = () => (
  <svg viewBox="0 0 24 24" className="size-6"><rect width="24" height="24" rx="2" fill="#252525" /><path d="M12 3H9a3 3 0 0 0 0 6h3z" fill="#f24e1e" /><path d="M12 3h3a3 3 0 0 1 0 6h-3z" fill="#ff7262" /><path d="M12 9H9a3 3 0 0 0 0 6h3z" fill="#a259ff" /><circle cx="15" cy="12" r="3" fill="#1abcfe" /><path d="M9 15h3v3a3 3 0 1 1-3-3z" fill="#0acf83" /></svg>
);
const Audacity = () => (
  <svg viewBox="0 0 24 24" className="size-6"><circle cx="12" cy="15" r="6.800" fill="#f9a300" /><path d="M6 14.500l1.500-2 1.500 3 1.500-4 2 4 1.500-3 1.500 3 2-2-1.500 4H7.500z" fill="#e3172a" /><path d="M3.500 17V11a8.500 9 0 0 1 17 0v6" fill="none" stroke="#0000c8" strokeWidth="2.600" /><rect x="0" y="13" width="4.600" height="9" rx="2.300" fill="#0000c8" /><rect x="19.400" y="13" width="4.600" height="9" rx="2.300" fill="#0000c8" /></svg>
);
const Word2013 = () => (
  <svg viewBox="0 0 24 24" className="size-6"><path d="M12 3.500h11.500v17H12z" fill="#fff" stroke="#2b579a" strokeWidth=".6" /><path d="M14 6.500h8M14 9h8M14 11.500h8M14 14h8M14 16.500h8" stroke="#2b579a" strokeWidth="1.200" /><path d="M0 3l14-2.500v23L0 21z" fill="#2b579a" /><text x="7" y="16" textAnchor="middle" fontSize="10" fontWeight="700" fill="#fff" fontFamily="Open Sans, sans-serif">W</text></svg>
);
const Groove = () => (
  <svg viewBox="0 0 24 24" className="size-6" fill="none" stroke="#fff"><path d="M15.500 1.800A10.600 10.600 0 1 0 21 6.500" strokeWidth="2.600" /><circle cx="12" cy="12.500" r="4" strokeWidth="3" /><path d="M16 4.500l4 4L22 4" strokeWidth="2" /></svg>
);

const DESKTOP: { icon: React.ReactNode; open?: boolean; active?: boolean }[] = [
  { icon: <span className="mr-[3px]"><TaskView c="size-4" /></span> }, { icon: <Putty /> }, { icon: <Mail /> }, { icon: <Monitor /> }, { icon: <Store /> },
  { icon: <AndroidStudio /> }, { icon: <Xampp c="size-6" />, open: true }, { icon: <FileZilla /> }, { icon: <VsCode />, open: true },
  { icon: <Chrome />, open: true }, { icon: <GreenTree /> }, { icon: <Obs /> }, { icon: <Explorer c="size-[22px]" /> }, { icon: <Xd /> },
  { icon: <Postman /> }, { icon: <Figma /> }, { icon: <Ps /> }, { icon: <Audacity /> }, { icon: <Word2013 />, active: true, open: true }, { icon: <Groove />, open: true },
];

function DesktopTaskbar() {
  return (
    <div className="flex h-[40px] shrink-0 items-center bg-[#101010] text-[12px] text-white">
      <div className="flex w-[48px] justify-center"><WinLogo c="size-4" /></div>
      <div className="mr-px flex h-full w-[344px] items-center border border-[#bdbdbd] bg-[#f2f2f2] pl-[11px]">
        <Search c="size-4" s="#222" />
        <Fit w={172} className="ml-[12px] text-[15px] text-[#333]">Ketik di sini untuk mencari</Fit>
      </div>
      {DESKTOP.map((d, i) => (
        <div key={i} className={"flex h-full w-[49.060px] shrink-0 flex-col items-center " + (d.active ? "bg-[#333]" : "")}>
          <div className="flex flex-1 items-center justify-center pt-[1px]">{d.icon}</div>
          <i className={"h-[2px] " + (d.active ? "w-full bg-[#aea7ec]" : d.open ? "w-[40px] bg-[#aea7ec]" : "w-0")} />
        </div>
      ))}
      <div className="ml-auto flex h-full items-center">
        <Chevron />
        <svg viewBox="0 0 14 14" className="ml-[12px] size-[14px]" fill="none" stroke="#fff" strokeWidth="1.100">
          <path d="M1 13.500A12.500 12.500 0 0 1 13.500 1M4 13.500A9.500 9.500 0 0 1 13.500 4M7 13.500A6.500 6.500 0 0 1 13.500 7M10 13.500A3.500 3.500 0 0 1 13.500 10" />
        </svg>
        <span className="ml-[7px]"><Speaker /></span>
        <div className="ml-[9px] flex flex-col items-center leading-[18px]">
          <Fit w={27}>10:52</Fit>
          <Fit w={57}>07/07/2021</Fit>
        </div>
        <svg viewBox="0 0 17 17" className="mr-[19px] ml-[18px] size-[17px]" fill="none" stroke="#fff" strokeWidth="1.200"><path d="M1 1h15v12.500h-5L8.500 16 6 13.500H1z" /></svg>
        <i className="mr-1 h-full w-px bg-[#666]" />
      </div>
    </div>
  );
}

export default function App() {
  return (
    <div className="relative flex h-[1080px] w-[1920px] flex-col overflow-hidden bg-white font-['Open_Sans','Noto_Sans',sans-serif]">
      <TitleBar />
      <ProtectedBar />
      <Document />
      <StatusBar />
      <DesktopTaskbar />

      <div className="absolute top-[123px] left-[219px] h-[837px] w-[1484px] border border-[#bcbcbc] bg-white pt-[2px] pl-[2px]">
        <BrowserWindow kind="report" />
      </div>
      <button className="absolute top-[123px] left-[1711px] flex size-[28px] items-center justify-center border border-[#a0a0a0] bg-[#fdfdfd]">
        <svg viewBox="0 0 18 18" className="size-[17px]" fill="none">
          <circle cx="7" cy="7" r="5.600" stroke="#737373" strokeWidth="1.700" />
          <path d="M11 11l6 6" stroke="#737373" strokeWidth="2.400" />
          <path d="M4 7h6" stroke="#2a6cb0" strokeWidth="1.800" />
        </svg>
      </button>
      <div className="absolute top-[513px] left-[16px] flex size-[38px] items-center justify-center rounded-full border-2 border-[#e6e6e6]">
        <i className="mr-[2px] size-0 border-y-[7.500px] border-r-[10px] border-y-transparent border-r-[#e2e2e2]" />
      </div>
      <div className="absolute top-[513px] left-[1866px] flex size-[38px] items-center justify-center rounded-full border-2 border-[#e6e6e6]">
        <i className="ml-[3px] size-0 border-y-[7.500px] border-l-[10px] border-y-transparent border-l-[#e2e2e2]" />
      </div>
    </div>
  );
}
